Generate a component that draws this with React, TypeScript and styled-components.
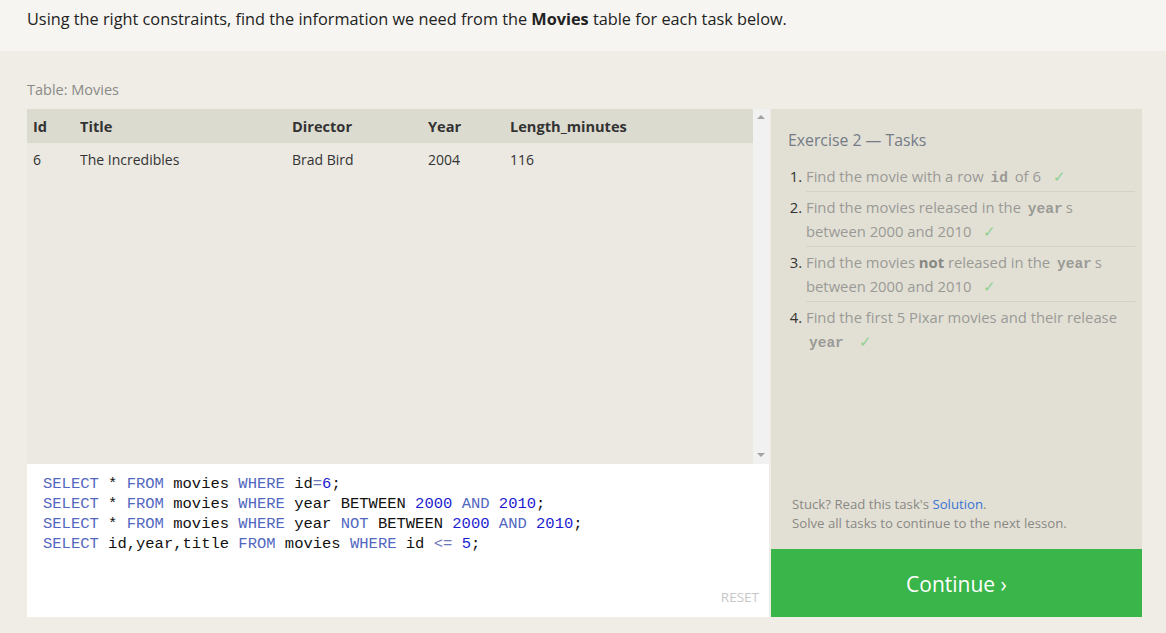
import React from "react";
import styled, { createGlobalStyle } from "styled-components";

const Global = createGlobalStyle`
  html, body { margin: 0; padding: 0; }
  body {
    background: #efede6;
    font-family: "Open Sans", "Noto Sans", sans-serif;
    color: #333;
  }
`;

const Page = styled.div`
  width: 1166px;
  height: 633px;
  overflow: hidden;
  display: flex;
  flex-direction: column;
`;

const Intro = styled.div`
  background: #f6f5f1;
  height: 51px;
  padding: 8px 0 0 27px;
  box-sizing: border-box;
  font-size: 16.3px;
  color: #222;
`;

const Main = styled.div`
  flex: 1;
  background: #efede6;
  border-top-left-radius: 6px;
  padding: 27px 24px 16px 27px;
  display: flex;
  flex-direction: column;
`;

const Caption = styled.div`
  font-size: 14.5px;
  color: #8a8a86;
  height: 31px;
  line-height: 24px;
`;

const Workspace = styled.div`
  display: flex;
  gap: 2px;
  height: 508px;
`;

const LeftCol = styled.div`
  width: 742px;
  display: flex;
  flex-direction: column;
`;

const TableArea = styled.div`
  height: 355px;
  display: flex;
  background: #ebe9e2;
`;

const TableScroll = styled.div`
  flex: 1;
`;

const Table = styled.table`
  width: 100%;
  border-collapse: collapse;
  font-size: 14px;
`;

const Th = styled.th<{ $w?: number }>`
  background: #dcdbd0;
  text-align: left;
  font-weight: 700;
  font-size: 14.6px;
  color: #333;
  height: 34px;
  padding: 0 0 0 6px;
  width: ${(p) => (p.$w ? `${p.$w}px` : "auto")};
  box-sizing: border-box;
`;

const Td = styled.td`
  height: 33px;
  padding: 0 0 0 6px;
  color: #333;
`;

const ScrollBar = styled.div`
  width: 16px;
  background: #f1f1f1;
  display: flex;
  flex-direction: column;
  justify-content: space-between;
  align-items: center;
  padding: 6px 0 7px;
  box-sizing: border-box;
`;

const Arrow = styled.div<{ $down?: boolean }>`
  width: 0;
  height: 0;
  border-left: 4px solid transparent;
  border-right: 4px solid transparent;
  ${(p) =>
    p.$down
      ? "border-top: 4px solid #a3a3a3;"
      : "border-bottom: 4px solid #a3a3a3;"}
`;

const Editor = styled.div`
  flex: 1;
  background: #fff;
  padding: 10px 16px 0 16px;
  position: relative;
  font-family: "Liberation Mono", "DejaVu Sans Mono", monospace;
  font-size: 15.5px;
  line-height: 20px;
  color: #111;
`;

const CodeLine = styled.div`
  white-space: pre;
`;

const Kw = styled.span`
  color: #5267c0;
`;
const Num = styled.span`
  color: #1c1cd0;
`;
const Op = styled.span`
  color: #6a78b8;
`;

const Reset = styled.div`
  position: absolute;
  right: 10px;
  bottom: 10px;
  font-family: "Open Sans", "Noto Sans", sans-serif;
  font-size: 13.5px;
  color: #c8c8c8;
`;

const RightCol = styled.div`
  width: 371px;
  display: flex;
  flex-direction: column;
`;

const TaskPanel = styled.div`
  flex: 1;
  background: #e2e0d5;
  padding: 20px 7px 16px 17px;
  display: flex;
  flex-direction: column;
`;

const TaskTitle = styled.div`
  font-size: 15.8px;
  color: #757b86;
  margin-bottom: 10px;
`;

const TaskList = styled.ol`
  margin: 0;
  padding: 0 0 0 18px;
  font-size: 14.8px;
  line-height: 24px;
`;

const TaskItem = styled.li`
  color: #333;
  padding: 3px 10px 3px 0;
  border-bottom: 1px solid #d4d2c8;
  &:last-child { border-bottom: none; }
`;

const TaskText = styled.span`
  color: #9a9a95;
`;

const Code = styled.code`
  font-family: "Liberation Mono", "DejaVu Sans Mono", monospace;
  font-weight: 700;
  color: #9a9a95;
  font-size: 14.5px;
  line-height: 0;
  margin: 0 3px;
`;

const Strong = styled.b`
  color: #888884;
`;

const Check = styled.span`
  color: #8fd18f;
  margin-left: 12px;
`;

const Help = styled.div`
  margin-top: auto;
  font-size: 13.2px;
  line-height: 19px;
  color: #8a8884;
  padding-left: 4px;
`;

const Link = styled.a`
  color: #3a73d6;
  text-decoration: none;
`;

const ContinueButton = styled.button`
  height: 68px;
  border: none;
  background: #3ab54a;
  color: #fff;
  font-family: "Open Sans", "Noto Sans", sans-serif;
  font-size: 21px;
  cursor: pointer;
  padding: 2px 0 0;
`;

export default function App() {
  return (
    <Page>
      <Global />
      <Intro>
        Using the right constraints, find the information we need from the <b>Movies</b> table for each task below.
      </Intro>
      <Main>
        <Caption>Table: Movies</Caption>
        <Workspace>
          <LeftCol>
            <TableArea>
              <TableScroll>
                <Table>
                  <thead>
                    <tr>
                      <Th $w={47}>Id</Th>
                      <Th $w={212}>Title</Th>
                      <Th $w={136}>Director</Th>
                      <Th $w={82}>Year</Th>
                      <Th>Length_minutes</Th>
                    </tr>
                  </thead>
                  <tbody>
                    <tr>
                      <Td>6</Td>
                      <Td>The Incredibles</Td>
                      <Td>Brad Bird</Td>
                      <Td>2004</Td>
                      <Td>116</Td>
                    </tr>
                  </tbody>
                </Table>
              </TableScroll>
              <ScrollBar>
                <Arrow />
                <Arrow $down />
              </ScrollBar>
            </TableArea>
            <Editor>
              <CodeLine>
                <Kw>SELECT</Kw> * <Kw>FROM</Kw> movies <Kw>WHERE</Kw> id<Op>=</Op><Num>6</Num>;
              </CodeLine>
              <CodeLine>
                <Kw>SELECT</Kw> * <Kw>FROM</Kw> movies <Kw>WHERE</Kw> year BETWEEN <Num>2000</Num> <Kw>AND</Kw> <Num>2010</Num>;
              </CodeLine>
              <CodeLine>
                <Kw>SELECT</Kw> * <Kw>FROM</Kw> movies <Kw>WHERE</Kw> year <Kw>NOT</Kw> BETWEEN <Num>2000</Num> <Kw>AND</Kw> <Num>2010</Num>;
              </CodeLine>
              <CodeLine>
                <Kw>SELECT</Kw> id,year,title <Kw>FROM</Kw> movies <Kw>WHERE</Kw> id <Op>&lt;=</Op> <Num>5</Num>;
              </CodeLine>
              <Reset>RESET</Reset>
            </Editor>
          </LeftCol>
          <RightCol>
            <TaskPanel>
              <TaskTitle>Exercise 2 — Tasks</TaskTitle>
              <TaskList>
                <TaskItem>
                  <TaskText>
                    Find the movie with a row <Code>id</Code> of 6<Check>✓</Check>
                  </TaskText>
                </TaskItem>
                <TaskItem>
                  <TaskText>
                    Find the movies released in the <Code>year</Code>s between 2000 and 2010<Check>✓</Check>
                  </TaskText>
                </TaskItem>
                <TaskItem>
                  <TaskText>
                    Find the movies <Strong>not</Strong> released in the <Code>year</Code>s between 2000 and 2010<Check>✓</Check>
                  </TaskText>
                </TaskItem>
                <TaskItem>
                  <TaskText>
                    Find the first 5 Pixar movies and their release <Code>year</Code>
                    <Check>✓</Check>
                  </TaskText>
                </TaskItem>
              </TaskList>
              <Help>
                Stuck? Read this task's <Link href="#">Solution</Link>.
                <br />
                Solve all tasks to continue to the next lesson.
              </Help>
            </TaskPanel>
            <ContinueButton>Continue ›</ContinueButton>
          </RightCol>
        </Workspace>
      </Main>
    </Page>
  );
}
